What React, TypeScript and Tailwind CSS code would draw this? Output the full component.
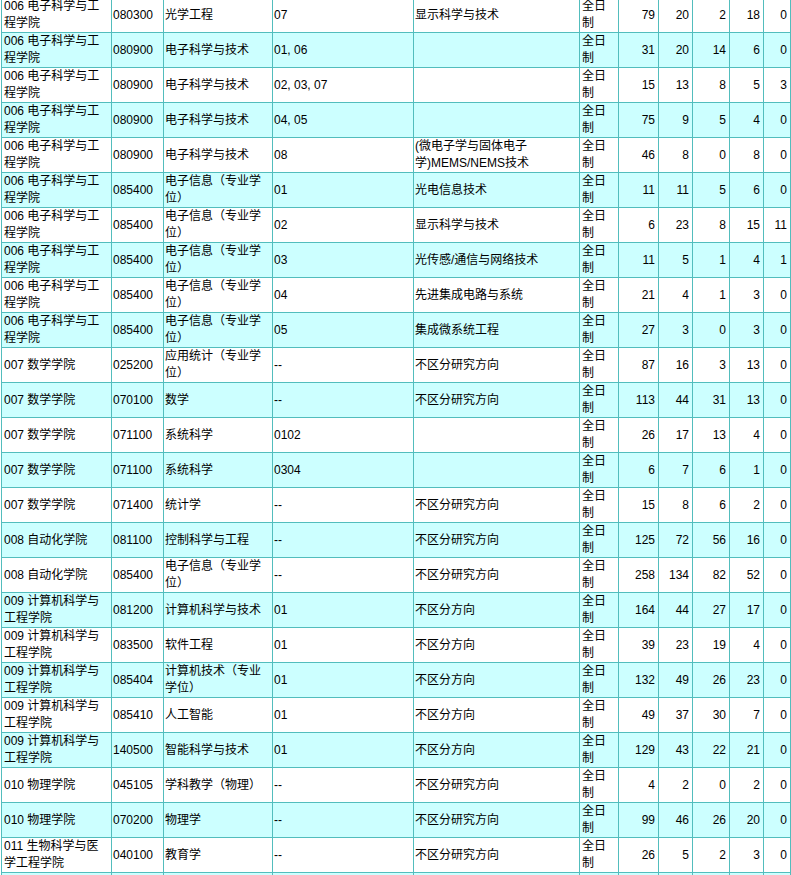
const rows: string[][] = [
  ['006 电子科学与工\n程学院', '080300', '光学工程', '07', '显示科学与技术', '79', '20', '2', '18', '0'],
  ['006 电子科学与工\n程学院', '080900', '电子科学与技术', '01, 06', '', '31', '20', '14', '6', '0'],
  ['006 电子科学与工\n程学院', '080900', '电子科学与技术', '02, 03, 07', '', '15', '13', '8', '5', '3'],
  ['006 电子科学与工\n程学院', '080900', '电子科学与技术', '04, 05', '', '75', '9', '5', '4', '0'],
  ['006 电子科学与工\n程学院', '080900', '电子科学与技术', '08', '(微电子学与固体电子\n学)MEMS/NEMS技术', '46', '8', '0', '8', '0'],
  ['006 电子科学与工\n程学院', '085400', '电子信息（专业学\n位）', '01', '光电信息技术', '11', '11', '5', '6', '0'],
  ['006 电子科学与工\n程学院', '085400', '电子信息（专业学\n位）', '02', '显示科学与技术', '6', '23', '8', '15', '11'],
  ['006 电子科学与工\n程学院', '085400', '电子信息（专业学\n位）', '03', '光传感/通信与网络技术', '11', '5', '1', '4', '1'],
  ['006 电子科学与工\n程学院', '085400', '电子信息（专业学\n位）', '04', '先进集成电路与系统', '21', '4', '1', '3', '0'],
  ['006 电子科学与工\n程学院', '085400', '电子信息（专业学\n位）', '05', '集成微系统工程', '27', '3', '0', '3', '0'],
  ['007 数学学院', '025200', '应用统计（专业学\n位）', '--', '不区分研究方向', '87', '16', '3', '13', '0'],
  ['007 数学学院', '070100', '数学', '--', '不区分研究方向', '113', '44', '31', '13', '0'],
  ['007 数学学院', '071100', '系统科学', '0102', '', '26', '17', '13', '4', '0'],
  ['007 数学学院', '071100', '系统科学', '0304', '', '6', '7', '6', '1', '0'],
  ['007 数学学院', '071400', '统计学', '--', '不区分研究方向', '15', '8', '6', '2', '0'],
  ['008 自动化学院', '081100', '控制科学与工程', '--', '不区分研究方向', '125', '72', '56', '16', '0'],
  ['008 自动化学院', '085400', '电子信息（专业学\n位）', '--', '不区分研究方向', '258', '134', '82', '52', '0'],
  ['009 计算机科学与\n工程学院', '081200', '计算机科学与技术', '01', '不区分方向', '164', '44', '27', '17', '0'],
  ['009 计算机科学与\n工程学院', '083500', '软件工程', '01', '不区分方向', '39', '23', '19', '4', '0'],
  ['009 计算机科学与\n工程学院', '085404', '计算机技术（专业\n学位）', '01', '不区分方向', '132', '49', '26', '23', '0'],
  ['009 计算机科学与\n工程学院', '085410', '人工智能', '01', '不区分方向', '49', '37', '30', '7', '0'],
  ['009 计算机科学与\n工程学院', '140500', '智能科学与技术', '01', '不区分方向', '129', '43', '22', '21', '0'],
  ['010 物理学院', '045105', '学科教学（物理）', '--', '不区分研究方向', '4', '2', '0', '2', '0'],
  ['010 物理学院', '070200', '物理学', '--', '不区分研究方向', '99', '46', '26', '20', '0'],
  ['011 生物科学与医\n学工程学院', '040100', '教育学', '--', '不区分研究方向', '26', '5', '2', '3', '0'],
];

const cols = [110, 52, 109, 141, 166, 39, 40, 34, 37, 34, 27];

const cell = 'border border-[#52bdbd] py-0 align-middle';

export default function App() {
  return (
    <div
      className="w-[791px] h-[875px] overflow-hidden bg-white text-black"
      style={{ fontFamily: '"Liberation Sans", "Noto Sans CJK SC", sans-serif' }}
    >
      <table className="table-fixed border-collapse w-[789px] -mt-[3px] ml-[1px] text-[12px] leading-[17px]">
        <colgroup>
          {cols.map((w, i) => (
            <col key={i} style={{ width: w }} />
          ))}
        </colgroup>
        <tbody>
          {rows.map((r, i) => (
            <tr key={i} className={i % 2 === 1 ? 'bg-[#ccffff]' : 'bg-white'}>
              <td className={`${cell} h-[35px] px-[2px] whitespace-pre-line`}>{r[0]}</td>
              <td className={`${cell} px-[1px]`}>{r[1]}</td>
              <td className={`${cell} px-[1px] whitespace-pre-line`}>{r[2]}</td>
              <td className={`${cell} px-[1px]`}>{r[3]}</td>
              <td className={`${cell} px-[1px] whitespace-pre-line`}>{r[4]}</td>
              <td className={`${cell} px-[2px] whitespace-pre-line`}>{'全日\n制'}</td>
              {r.slice(5).map((n, j) => (
                <td key={j} className={`${cell} pl-[2px] pr-[3px] text-right`}>
                  {n}
                </td>
              ))}
            </tr>
          ))}
          {/* next row, only its top edge shows */}
          <tr className="bg-[#ccffff]">
            {cols.map((_, j) => (
              <td key={j} className={`${cell} h-[35px]`}></td>
            ))}
          </tr>
        </tbody>
      </table>
    </div>
  );
}
